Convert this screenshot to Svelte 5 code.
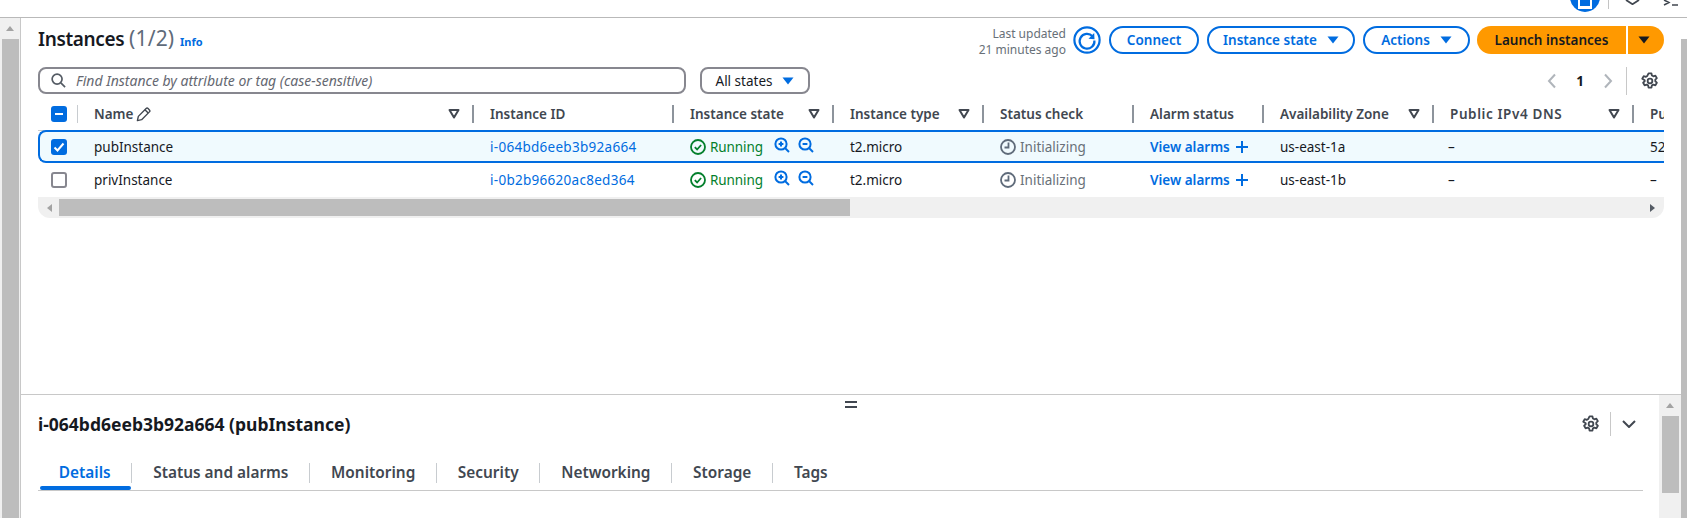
<script>
  const columns = [
    { label: 'Instance ID', filter: false },
    { label: 'Instance state', filter: true },
    { label: 'Instance type', filter: true },
    { label: 'Status check', filter: false },
    { label: 'Alarm status', filter: false },
    { label: 'Availability Zone', filter: true },
    { label: 'Public IPv4 DNS', filter: true, wide: true },
    { label: 'Pu', filter: false }
  ];
  const rows = [
    { name: 'pubInstance', id: 'i-064bd6eeb3b92a664', zone: 'us-east-1a', ip: '52', selected: true },
    { name: 'privInstance', id: 'i-0b2b96620ac8ed364', zone: 'us-east-1b', ip: '–', selected: false }
  ];
  const tabs = ['Details', 'Status and alarms', 'Monitoring', 'Security', 'Networking', 'Storage', 'Tags'];
</script>

{#snippet caret(cls)}
  <svg class={cls} viewBox="0 0 12 8" aria-hidden="true"><path d="M0.5 0.5h11L6 7.5z" /></svg>
{/snippet}

{#snippet gear()}
  <svg class="gear" viewBox="0 0 16 16" aria-hidden="true">
    <circle cx="8" cy="8" r="2.1" />
    <path d="M6.7 1.2h2.6l.4 1.9 1.3.7 1.8-.6 1.3 2.3-1.4 1.3v1.4l1.4 1.3-1.3 2.3-1.8-.6-1.3.7-.4 1.9H6.7l-.4-1.9-1.3-.7-1.8.6-1.3-2.3 1.4-1.3V7.3L1.100 6l1.300-2.300 1.800.6 1.300-.7z" />
  </svg>
{/snippet}

{#snippet zoomIcon(plus)}
  <svg class="zoom" viewBox="0 0 16 16" aria-hidden="true">
    <circle cx="7" cy="7" r="5.6" />
    <path d="M11 11l4 4" />
    <path d="M4.600 7h4.800" />
    {#if plus}<path d="M7 4.600v4.800" />{/if}
  </svg>
{/snippet}

<div class="page">
  <header class="browser">
    <span class="avatar"><span class="avatar-box"></span></span>
    <span class="browser-sep"></span>
    <svg class="shield" viewBox="0 0 15 5" aria-hidden="true"><path d="M1 0l6.500 4.200L14 0" /></svg>
    <svg class="term" viewBox="0 0 15 6" aria-hidden="true"><path d="M1 0l5 2.500-5 2.500M9 5h6" /></svg>
  </header>

  <div class="work">
    <div class="vscroll left">
      <span class="arrow-up"></span>
      <span class="thumb"></span>
    </div>

    <div class="panes">
      <section class="list">
        <div class="head-row">
          <h1>Instances <span class="count">(1/2)</span> <a class="info">Info</a></h1>
          <div class="actions">
            <p class="updated">Last updated<br />21 minutes ago</p>
            <span class="refresh">
              <svg viewBox="0 0 28 28" aria-hidden="true">
                <circle cx="14" cy="14" r="12.600" />
                <path d="M19.500 10.300A7.400 7.400 0 1 0 21.400 14.500" />
                <path class="fill" d="M15.500 12.800l6 .4-.3-6.200z" />
              </svg>
            </span>
            <button class="btn connect">Connect</button>
            <button class="btn state">Instance state {@render caret('caret')}</button>
            <button class="btn act">Actions {@render caret('caret')}</button>
            <div class="launch">
              <button class="launch-main">Launch instances</button>
              <button class="launch-drop">{@render caret('caret dark')}</button>
            </div>
          </div>
        </div>

        <div class="filter-row">
          <div class="search">
            <svg viewBox="0 0 16 16" aria-hidden="true"><circle cx="6.500" cy="6.500" r="5.300" /><path d="M10.500 10.500l4.500 4.500" /></svg>
            <span>Find Instance by attribute or tag (case-sensitive)</span>
          </div>
          <div class="states">All states {@render caret('caret')}</div>
          <div class="pager">
            <svg class="chev" viewBox="0 0 10 16" aria-hidden="true"><path d="M8 1.500L2 8l6 6.500" /></svg>
            <b>1</b>
            <svg class="chev" viewBox="0 0 10 16" aria-hidden="true"><path d="M2 1.500L8 8l-6 6.500" /></svg>
            <span class="pager-sep"></span>
            {@render gear()}
          </div>
        </div>

        <div class="table">
          <div class="grid thead">
            <div class="cell check">
              <span class="box on"><span class="dash"></span></span>
              <i class="sep light"></i>
            </div>
            <div class="cell">
              <span class="th">Name</span>
              <svg class="pencil" viewBox="0 0 16 16" aria-hidden="true"><path d="M1.500 14.500l1-4.500L10.800 1.700a1.500 1.500 0 0 1 2.100 0l1.400 1.400a1.500 1.500 0 0 1 0 2.100L6 13.500z" /><path d="M9.500 3l3.500 3.500" /></svg>
              <svg class="tri" viewBox="0 0 12 10" aria-hidden="true"><path d="M1.500 1h9L6 8.500z" /></svg>
              <i class="sep"></i>
            </div>
            {#each columns as col, i}
              <div class="cell">
                <span class="th" class:wide={col.wide}>{col.label}</span>
                {#if col.filter}
                  <svg class="tri" viewBox="0 0 12 10" aria-hidden="true"><path d="M1.500 1h9L6 8.500z" /></svg>
                {/if}
                {#if i < columns.length - 1}<i class="sep"></i>{/if}
              </div>
            {/each}
          </div>

          {#each rows as row}
            <div class="grid trow" class:selected={row.selected}>
              <div class="cell check">
                {#if row.selected}
                  <span class="box on">
                    <svg viewBox="0 0 16 16" aria-hidden="true"><path d="M3.500 8.500l3 3 6-7" /></svg>
                  </span>
                {:else}
                  <span class="box"></span>
                {/if}
              </div>
              <div class="cell">{row.name}</div>
              <div class="cell link">{row.id}</div>
              <div class="cell">
                <span class="running">
                  <svg viewBox="0 0 16 16" aria-hidden="true"><circle cx="8" cy="8" r="7" /><path d="M4.800 8.200l2.300 2.300 4-4.500" /></svg>
                  Running
                </span>
                <span class="zooms">{@render zoomIcon(true)}{@render zoomIcon(false)}</span>
              </div>
              <div class="cell">t2.micro</div>
              <div class="cell muted">
                <svg class="clock" viewBox="0 0 16 16" aria-hidden="true"><circle cx="8" cy="8" r="7" /><path d="M8.500 3.500v5h-4" /></svg>
                Initializing
              </div>
              <div class="cell alarm">View alarms <svg class="plus" viewBox="0 0 12 12" aria-hidden="true"><path d="M6 0v12M0 6h12" /></svg></div>
              <div class="cell">{row.zone}</div>
              <div class="cell dashed">–</div>
              <div class="cell">{row.ip}</div>
            </div>
          {/each}

          <div class="hscroll">
            <span class="arrow-l"></span>
            <span class="hthumb"></span>
            <span class="arrow-r"></span>
          </div>
        </div>
      </section>

      <section class="detail">
        <span class="handle"></span>
        <div class="detail-main">
          <div class="detail-head">
            <h2>i-064bd6eeb3b92a664 (pubInstance)</h2>
            <div class="detail-tools">
              {@render gear()}
              <span class="tool-sep"></span>
              <svg class="down" viewBox="0 0 14 8" aria-hidden="true"><path d="M1 1l6 6 6-6" /></svg>
            </div>
          </div>
          <nav class="tabs">
            {#each tabs as tab, i}
              <span class="tab" class:active={i === 0}>{tab}</span>
            {/each}
          </nav>
        </div>
        <div class="vscroll inner">
          <span class="arrow-up"></span>
          <span class="thumb short"></span>
        </div>
      </section>
    </div>

    <div class="vscroll right">
      <span class="thumb"></span>
    </div>
  </div>
</div>

<style>
  :global(body) {
    margin: 0;
    background: #fff;
  }
  .page {
    width: 1687px;
    height: 518px;
    overflow: hidden;
    display: flex;
    flex-direction: column;
    font-family: "Noto Sans", "Open Sans", sans-serif;
    font-size: 13.500px;
    color: #16191f;
  }
  .browser {
    height: 17px;
    flex: none;
    border-bottom: 1px solid #b9b9b9;
    display: flex;
    align-items: flex-start;
    justify-content: flex-end;
    overflow: hidden;
    padding-right: 9px;
  }
  .avatar {
    width: 30px;
    height: 30px;
    margin-top: -18px;
    border-radius: 50%;
    background: #006ce0;
    display: flex;
    align-items: flex-end;
    justify-content: center;
    padding-bottom: 3px;
    box-sizing: border-box;
  }
  .avatar-box {
    width: 14px;
    height: 9px;
    border: 2px solid #fff;
    border-top: 0;
    box-sizing: border-box;
    box-shadow: 0 -1px 0 #fff inset;
  }
  .browser-sep {
    width: 1px;
    height: 9px;
    background: #c4c4c4;
    margin-left: 8px;
  }
  .shield {
    width: 15px;
    height: 5px;
    margin-left: 16px;
    fill: none;
    stroke: #414750;
    stroke-width: 1.800;
  }
  .term {
    width: 15px;
    height: 6px;
    margin-left: 23px;
    fill: none;
    stroke: #414750;
    stroke-width: 1.500;
  }

  .work {
    flex: 1;
    min-height: 0;
    display: flex;
  }
  .vscroll {
    flex: none;
    background: #f0f0f0;
    display: flex;
    flex-direction: column;
    align-items: center;
  }
  .vscroll.left {
    width: 20px;
    border-right: 1px solid #c8c8c8;
    box-sizing: content-box;
    padding-top: 8px;
  }
  .vscroll.right {
    width: 6px;
    padding-top: 21px;
    background: #fff;
  }
  .vscroll.right .thumb {
    width: 6px;
  }
  .vscroll.inner {
    width: 22px;
    padding-top: 8px;
    margin-left: auto;
  }
  .arrow-up {
    width: 0;
    height: 0;
    border-left: 4.500px solid transparent;
    border-right: 4.500px solid transparent;
    border-bottom: 5px solid #a3a3a3;
    margin-bottom: 8px;
  }
  .thumb {
    width: 17px;
    flex: 1;
    background: #bdbdbd;
  }
  .thumb.short {
    flex: none;
    height: 77px;
  }

  .panes {
    flex: 1;
    min-width: 0;
    display: flex;
    flex-direction: column;
  }
  .list {
    height: 377px;
    flex: none;
    box-sizing: border-box;
    padding: 8px 16px 0 17px;
    border-bottom: 1px solid #c8c8c8;
  }
  .head-row {
    height: 28px;
    display: flex;
    align-items: center;
    justify-content: space-between;
  }
  h1 {
    margin: 0;
    font-size: 19px;
    font-weight: 600;
    letter-spacing: -0.350px;
    line-height: 28px;
  }
  .count {
    font-size: 21px;
    font-weight: 400;
    letter-spacing: 0.200px;
    color: #5f6b7a;
  }
  .info {
    font-size: 11px;
    font-weight: 700;
    color: #006ce0;
    margin-left: 1px;
    letter-spacing: 0;
  }
  .actions {
    display: flex;
    align-items: center;
    padding-right: 1px;
  }
  .updated {
    margin: 3px 7px 0 0;
    text-align: right;
    font-size: 12px;
    line-height: 16px;
    color: #687078;
  }
  .refresh {
    width: 28px;
    height: 28px;
    margin-right: 8px;
  }
  .refresh svg {
    width: 28px;
    height: 28px;
    display: block;
    fill: none;
    stroke: #006ce0;
    stroke-width: 2.200;
  }
  .refresh .fill {
    fill: #006ce0;
    stroke: none;
  }
  .btn {
    height: 28px;
    box-sizing: border-box;
    border: 2px solid #006ce0;
    border-radius: 14px;
    background: #fff;
    color: #006ce0;
    font: 600 13.500px "Noto Sans", sans-serif;
    padding: 0;
    display: flex;
    align-items: center;
    justify-content: center;
    gap: 10px;
    margin-right: 8px;
  }
  .connect { width: 90px; }
  .state { width: 148px; }
  .act { width: 107px; margin-right: 7px; }
  .caret {
    width: 12px;
    height: 8px;
    fill: #006ce0;
    flex: none;
  }
  .caret.dark {
    fill: #16191f;
  }
  .launch {
    display: flex;
    gap: 2px;
    height: 28px;
  }
  .launch button {
    border: 0;
    padding: 0;
    background: #ff9900;
    height: 28px;
    color: #16191f;
    font: 600 13.500px "Noto Sans", sans-serif;
  }
  .launch-main {
    width: 149px;
    border-radius: 14px 0 0 14px;
  }
  .launch-drop {
    width: 36px;
    border-radius: 0 14px 14px 0;
    display: flex;
    align-items: center;
    justify-content: center;
    padding-right: 4px !important;
  }

  .filter-row {
    margin-top: 13px;
    height: 27px;
    display: flex;
    align-items: center;
  }
  .search {
    width: 648px;
    height: 27px;
    box-sizing: border-box;
    border: 2px solid #87878f;
    border-radius: 8px;
    display: flex;
    align-items: center;
    padding-left: 11px;
    gap: 10px;
    font-style: italic;
    font-size: 14px;
    color: #656871;
  }
  .search svg {
    width: 15px;
    height: 15px;
    fill: none;
    stroke: #545b64;
    stroke-width: 1.800;
  }
  .states {
    width: 110px;
    height: 27px;
    margin-left: 14px;
    box-sizing: border-box;
    border: 2px solid #87878f;
    border-radius: 8px;
    display: flex;
    align-items: center;
    justify-content: center;
    gap: 10px;
  }
  .pager {
    margin-left: auto;
    display: flex;
    align-items: center;
    height: 28px;
    padding-right: 6px;
  }
  .pager b {
    margin: 0 19px;
    font-weight: 700;
  }
  .chev {
    width: 10px;
    height: 16px;
    fill: none;
    stroke: #b0b5bb;
    stroke-width: 2;
  }
  .pager-sep {
    width: 1px;
    height: 28px;
    background: #c8c8c8;
    margin: 0 14px 0 13px;
  }
  .gear {
    width: 18px;
    height: 18px;
    fill: none;
    stroke: #414750;
    stroke-width: 1.600;
    stroke-linejoin: round;
  }

  .table {
    margin-top: 11px;
    width: 1626px;
    overflow: hidden;
  }
  .grid {
    display: grid;
    grid-template-columns: 40px 396px 200px 160px 150px 150px 130px 170px 200px 30px;
  }
  .thead {
    height: 25px;
    border-bottom: 1px solid #c8c8c8;
    align-items: start;
  }
  .thead .cell {
    height: 18px;
    position: relative;
    color: #414750;
    font-weight: 600;
  }
  .th.wide {
    letter-spacing: 0.600px;
  }
  .cell {
    display: flex;
    align-items: center;
    padding-left: 16px;
    white-space: nowrap;
    overflow: hidden;
  }
  .sep {
    position: absolute;
    right: 0;
    top: 0;
    width: 2px;
    height: 18px;
    background: #8d949c;
  }
  .sep.light {
    width: 1px;
    background: #c8ccd0;
  }
  .tri {
    position: absolute;
    right: 14px;
    top: 4px;
    width: 12px;
    height: 10px;
    fill: none;
    stroke: #414750;
    stroke-width: 2;
    stroke-linejoin: round;
  }
  .pencil {
    width: 15px;
    height: 15px;
    margin-left: 3px;
    fill: none;
    stroke: #414750;
    stroke-width: 1.500;
    stroke-linejoin: round;
  }
  .cell.check {
    padding-left: 13px;
    overflow: visible;
  }
  .box {
    width: 16px;
    height: 16px;
    box-sizing: border-box;
    border: 2px solid #87878f;
    border-radius: 3px;
    display: flex;
    align-items: center;
    justify-content: center;
    background: #fff;
  }
  .box.on {
    border: 0;
    background: #006ce0;
  }
  .box svg {
    width: 16px;
    height: 16px;
    fill: none;
    stroke: #fff;
    stroke-width: 2;
  }
  .dash {
    width: 8px;
    height: 2px;
    background: #fff;
  }
  .trow {
    height: 34px;
    box-sizing: border-box;
    padding-bottom: 1px;
  }
  .trow.selected {
    background: #f0fafe;
    border-top: 2px solid #006ce0;
    border-bottom: 2px solid #006ce0;
    border-left: 2px solid #006ce0;
    border-radius: 8px 0 0 8px;
    margin-top: -1px;
    height: 33px;
    padding-bottom: 0;
    grid-template-columns: 38px 396px 200px 160px 150px 150px 130px 170px 200px 30px;
  }
  .trow.selected .cell.check {
    padding-left: 11px;
  }
  .link {
    color: #006ce0;
    letter-spacing: 0.280px;
  }
  .dashed {
    padding-left: 14px;
  }
  .running {
    display: inline-flex;
    align-items: center;
    gap: 4px;
    color: #037f2c;
    letter-spacing: -0.100px;
  }
  .running svg {
    width: 16px;
    height: 16px;
    fill: none;
    stroke: #037f2c;
    stroke-width: 1.800;
  }
  .zooms {
    display: inline-flex;
    gap: 8px;
    margin-left: 11px;
    margin-top: -3px;
  }
  .zoom {
    width: 16px;
    height: 16px;
    fill: none;
    stroke: #006ce0;
    stroke-width: 2;
  }
  .muted {
    color: #687078;
  }
  .clock {
    width: 16px;
    height: 16px;
    margin-right: 4px;
    fill: none;
    stroke: #5f6b7a;
    stroke-width: 1.800;
  }
  .alarm {
    color: #006ce0;
    font-weight: 600;
    gap: 6px;
  }
  .plus {
    width: 12px;
    height: 12px;
    fill: none;
    stroke: #006ce0;
    stroke-width: 2;
  }
  .hscroll {
    height: 21px;
    background: #f0f0f0;
    border-radius: 0 0 12px 12px;
    display: flex;
    align-items: center;
  }
  .arrow-l {
    width: 0;
    height: 0;
    margin-left: 9px;
    border-top: 4.500px solid transparent;
    border-bottom: 4.500px solid transparent;
    border-right: 5px solid #a3a3a3;
  }
  .hthumb {
    width: 791px;
    height: 17px;
    background: #bdbdbd;
    margin-left: 7px;
  }
  .arrow-r {
    width: 0;
    height: 0;
    margin-left: auto;
    margin-right: 9px;
    border-top: 4.500px solid transparent;
    border-bottom: 4.500px solid transparent;
    border-left: 5px solid #545b64;
  }

  .detail {
    flex: 1;
    min-height: 0;
    display: flex;
    position: relative;
  }
  .handle {
    position: absolute;
    left: 824px;
    top: 6px;
    width: 12px;
    height: 3px;
    border-top: 2px solid #414750;
    border-bottom: 2px solid #414750;
  }
  .detail-main {
    width: 1622px;
    flex: none;
    padding-left: 17px;
    box-sizing: border-box;
  }
  .detail-head {
    height: 24px;
    margin-top: 17px;
    display: flex;
    align-items: center;
    justify-content: space-between;
  }
  h2 {
    margin: 0;
    font-size: 17.500px;
    font-weight: 700;
  }
  .detail-tools {
    display: flex;
    align-items: center;
    padding-right: 7px;
  }
  .tool-sep {
    width: 1px;
    height: 24px;
    background: #c8c8c8;
    margin: 0 11px 0 10px;
  }
  .down {
    width: 14px;
    height: 8px;
    fill: none;
    stroke: #414750;
    stroke-width: 2;
  }
  .tabs {
    margin-top: 27px;
    height: 27px;
    border-bottom: 1px solid #c8c8c8;
    display: flex;
  }
  .tab {
    position: relative;
    height: 20px;
    line-height: 20px;
    padding: 0 20.800px;
    font-size: 15.400px;
    font-weight: 600;
    color: #414750;
    border-left: 1px solid #c8ccd0;
  }
  .tab.active {
    border-left: 0;
    color: #006ce0;
  }
  .tab.active::after {
    content: "";
    position: absolute;
    left: 2px;
    right: 0;
    top: 23px;
    height: 4px;
    border-radius: 2px;
    background: #006ce0;
  }
</style>
